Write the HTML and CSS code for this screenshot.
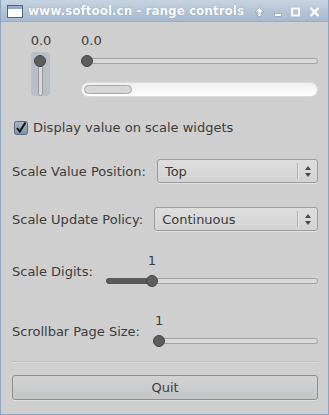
FILE: index.html
```html
<!DOCTYPE html>
<html lang="en">
<head>
  <meta charset="UTF-8">
  <title>www.softool.cn - range controls</title>
  <link rel="stylesheet" href="styles.css">
</head>
<body>
  <div class="window">
    <div class="titlebar">
      <svg class="app-icon" width="16" height="13" viewBox="0 0 16 13">
        <rect x="0.5" y="0.5" width="15" height="12" fill="#ffffff" stroke="#4f6580"/>
        <rect x="1" y="1" width="14" height="3" fill="#8fa9cc"/>
      </svg>
      <span class="title">www.softool.cn - range controls</span>
      <div class="wm-buttons">
        <svg width="11" height="10" viewBox="0 0 11 10">
          <path d="M5.5 0.5 L10 5 L7 5 L7 9.5 L4 9.5 L4 5 L1 5 Z" fill="#ffffff" stroke="#7d8ea4" stroke-width="0.6"/>
        </svg>
        <svg width="8" height="10" viewBox="0 0 8 10">
          <rect x="0.5" y="6.5" width="7" height="3" fill="#ffffff" stroke="#7d8ea4" stroke-width="0.6"/>
        </svg>
        <svg width="9" height="10" viewBox="0 0 9 10">
          <rect x="1" y="1.5" width="7" height="7" fill="none" stroke="#ffffff" stroke-width="1.8"/>
        </svg>
        <svg width="11" height="10" viewBox="0 0 11 10">
          <path d="M1.5 1 L9.5 9 M9.5 1 L1.5 9" stroke="#ffffff" stroke-width="2.2"/>
        </svg>
      </div>
    </div>

    <div class="content">
      <div class="top-row">
        <div class="vscale">
          <div class="scale-value">0.0</div>
          <div class="vscale-box">
            <div class="vtrough"></div>
            <div class="thumb vthumb"></div>
          </div>
        </div>
        <div class="hcol">
          <div class="scale-value">0.0</div>
          <div class="hscale">
            <div class="trough"></div>
            <div class="thumb" style="--pos: 0"></div>
          </div>
          <div class="scrollbar"><div class="scroll-slider"></div></div>
        </div>
      </div>

      <label class="check-row">
        <svg class="checkbox" width="14" height="14" viewBox="0 0 14 14">
          <defs>
            <linearGradient id="cbg" x1="0" y1="0" x2="0" y2="1">
              <stop offset="0" stop-color="#a9b8c9"/>
              <stop offset="1" stop-color="#7d90a8"/>
            </linearGradient>
          </defs>
          <rect x="0.5" y="0.5" width="13" height="13" rx="2" fill="url(#cbg)" stroke="#5a6b80"/>
          <path d="M3 7 L5.8 10.5 L11.5 1.5" fill="none" stroke="#111111" stroke-width="2"/>
        </svg>
        <span>Display value on scale widgets</span>
      </label>

      <div class="form-row combo-row">
        <span class="field-label">Scale Value Position:</span>
        <div class="combo">
          <span class="combo-text">Top</span>
          <span class="combo-sep"></span>
          <span class="combo-arrows"><i class="arr-up"></i><i class="arr-down"></i></span>
        </div>
      </div>

      <div class="form-row combo-row">
        <span class="field-label">Scale Update Policy:</span>
        <div class="combo">
          <span class="combo-text">Continuous</span>
          <span class="combo-sep"></span>
          <span class="combo-arrows"><i class="arr-up"></i><i class="arr-down"></i></span>
        </div>
      </div>

      <div class="form-row scale-row">
        <span class="field-label">Scale Digits:</span>
        <div class="scale" style="--pos: 0.2">
          <div class="scale-top"><span class="value-float">1</span></div>
          <div class="hscale">
            <div class="trough"></div>
            <div class="fill"></div>
            <div class="thumb"></div>
          </div>
        </div>
      </div>

      <div class="form-row scale-row">
        <span class="field-label">Scrollbar Page Size:</span>
        <div class="scale" style="--pos: 0">
          <div class="scale-top"><span class="value-float">1</span></div>
          <div class="hscale">
            <div class="trough"></div>
            <div class="thumb"></div>
          </div>
        </div>
      </div>

      <hr class="separator">

      <button class="quit">Quit</button>
    </div>
  </div>
</body>
</html>
```

FILE: styles.css
```css
html, body {
  margin: 0;
  padding: 0;
  background: #cfcfcf;
}
body {
  font-family: "DejaVu Sans", "Liberation Sans", sans-serif;
  font-size: 13px;
  color: #3c3c3c;
}
.window {
  width: 329px;
  height: 415px;
  box-sizing: border-box;
  border: 1px solid #8fa5bf;
  border-top: none;
  background: #cfcfcf;
  overflow: hidden;
}

/* title bar */
.titlebar {
  height: 22px;
  margin: 0 -1px;
  display: flex;
  align-items: center;
  background: linear-gradient(#c6d3e1, #a6b9cf);
  border-radius: 3px 3px 0 0;
  box-sizing: border-box;
  border-bottom: 1px solid #9aadc4;
}
.app-icon {
  margin-left: 7px;
  margin-top: 1px;
}
.title {
  margin-left: 5px;
  font-weight: bold;
  font-size: 12px;
  color: #ffffff;
  text-shadow: 0 0 1px #6a7d95;
  flex: 1;
}
.wm-buttons {
  display: flex;
  align-items: center;
  gap: 9px;
  margin-right: 9px;
  margin-top: 2px;
}

/* content */
.content {
  padding: 11px 10px 0 11px;
}
.scale-value {
  line-height: 15px;
  height: 15px;
}
.top-row {
  display: flex;
}
.vscale {
  width: 20px;
  margin-left: 19px;
  text-align: center;
}
.vscale .scale-value {
  margin-left: -4px;
  margin-right: -4px;
}
.vscale-box {
  margin-top: 4px;
  width: 19px;
  height: 44px;
  background: #b9bfc6;
  border-radius: 4px;
  position: relative;
}
.vtrough {
  position: absolute;
  left: 7px;
  top: 8px;
  width: 3px;
  height: 34px;
  border: 1px solid #9a9a9a;
  border-radius: 3px;
  background: #d8d8d8;
}
.thumb {
  position: absolute;
  width: 12px;
  height: 12px;
  box-sizing: border-box;
  border-radius: 50%;
  background: #5e5e5e;
  border: 1px solid #454545;
}
.vthumb {
  left: 3px;
  top: 3px;
}
.hcol {
  flex: 1;
  margin-left: 30px;
}
.hscale {
  position: relative;
  height: 12px;
}
.hcol .hscale {
  margin-top: 7px;
}
.trough {
  position: absolute;
  left: 0;
  right: 0;
  top: 3px;
  height: 6px;
  box-sizing: border-box;
  border: 1px solid #a2a2a2;
  border-radius: 3px;
  background: #d9d9d9;
}
.hscale .thumb {
  top: 0;
  left: calc(var(--pos) * (100% - 12px));
}
.fill {
  position: absolute;
  left: 0;
  top: 3px;
  height: 6px;
  width: calc(6px + var(--pos) * (100% - 12px));
  border-radius: 3px;
  background: #5a5a5a;
}
.scrollbar {
  margin-top: 15px;
  height: 15px;
  box-sizing: border-box;
  border-radius: 8px;
  background: linear-gradient(#f0f0f0, #ffffff);
  border: 1px solid #dcdcdc;
  padding: 2px;
}
.scroll-slider {
  width: 48px;
  height: 9px;
  box-sizing: border-box;
  border: 1px solid #a6a6a6;
  border-radius: 5px;
  background: #d7d7d7;
}

/* checkbox */
.check-row {
  display: flex;
  align-items: center;
  height: 15px;
  margin-top: 23px;
  margin-left: 2px;
  line-height: 15px;
}
.checkbox {
  margin-right: 5px;
}

/* label + widget rows */
.form-row {
  display: flex;
  align-items: center;
}
.combo-row {
  margin-top: 24px;
  height: 24px;
  gap: 11px;
}
.combo {
  flex: 1;
  height: 24px;
  box-sizing: border-box;
  border: 1px solid #9c9c9c;
  border-radius: 3px;
  background: linear-gradient(#dedede, #d3d3d3);
  box-shadow: 0 1px 0 rgba(255, 255, 255, 0.4);
  display: flex;
  align-items: center;
}
.combo-text {
  flex: 1;
  padding-left: 7px;
  color: #3a3a3a;
}
.combo-sep {
  width: 1px;
  height: 16px;
  background: #b2b2b2;
  border-right: 1px solid #e6e6e6;
}
.combo-arrows {
  width: 18px;
  display: flex;
  flex-direction: column;
  align-items: center;
  gap: 3px;
}
.arr-up, .arr-down {
  width: 0;
  height: 0;
  border-left: 3px solid transparent;
  border-right: 3px solid transparent;
}
.arr-up {
  border-bottom: 4px solid #4a4a4a;
}
.arr-down {
  border-top: 4px solid #4a4a4a;
}

.scale-row {
  height: 36px;
  gap: 13px;
}
.scale-row:nth-of-type(1) {
  margin-top: 22px;
}
.scale {
  flex: 1;
  height: 36px;
}
.scale-top {
  position: relative;
  height: 15px;
  line-height: 15px;
}
.value-float {
  position: absolute;
  left: calc(6px + var(--pos) * (100% - 12px));
  transform: translateX(-50%);
}
.scale .hscale {
  margin-top: 7px;
}
.form-row.scale-row {
  margin-top: 24px;
}
.combo-row + .scale-row {
  margin-top: 22px;
}

.separator {
  margin: 12px 0 0 0;
  border: none;
  border-top: 1px solid #c0c0c0;
  border-bottom: 1px solid #dadada;
  height: 0;
}
.quit {
  display: block;
  width: 100%;
  height: 25px;
  margin-top: 12px;
  font-family: inherit;
  font-size: 13px;
  color: #3c3c3c;
  border: 1px solid #8f8f8f;
  border-radius: 3px;
  background: linear-gradient(#d2d2d2, #c3c6c9);
  box-shadow: 0 1px 0 rgba(255, 255, 255, 0.35);
}
```
